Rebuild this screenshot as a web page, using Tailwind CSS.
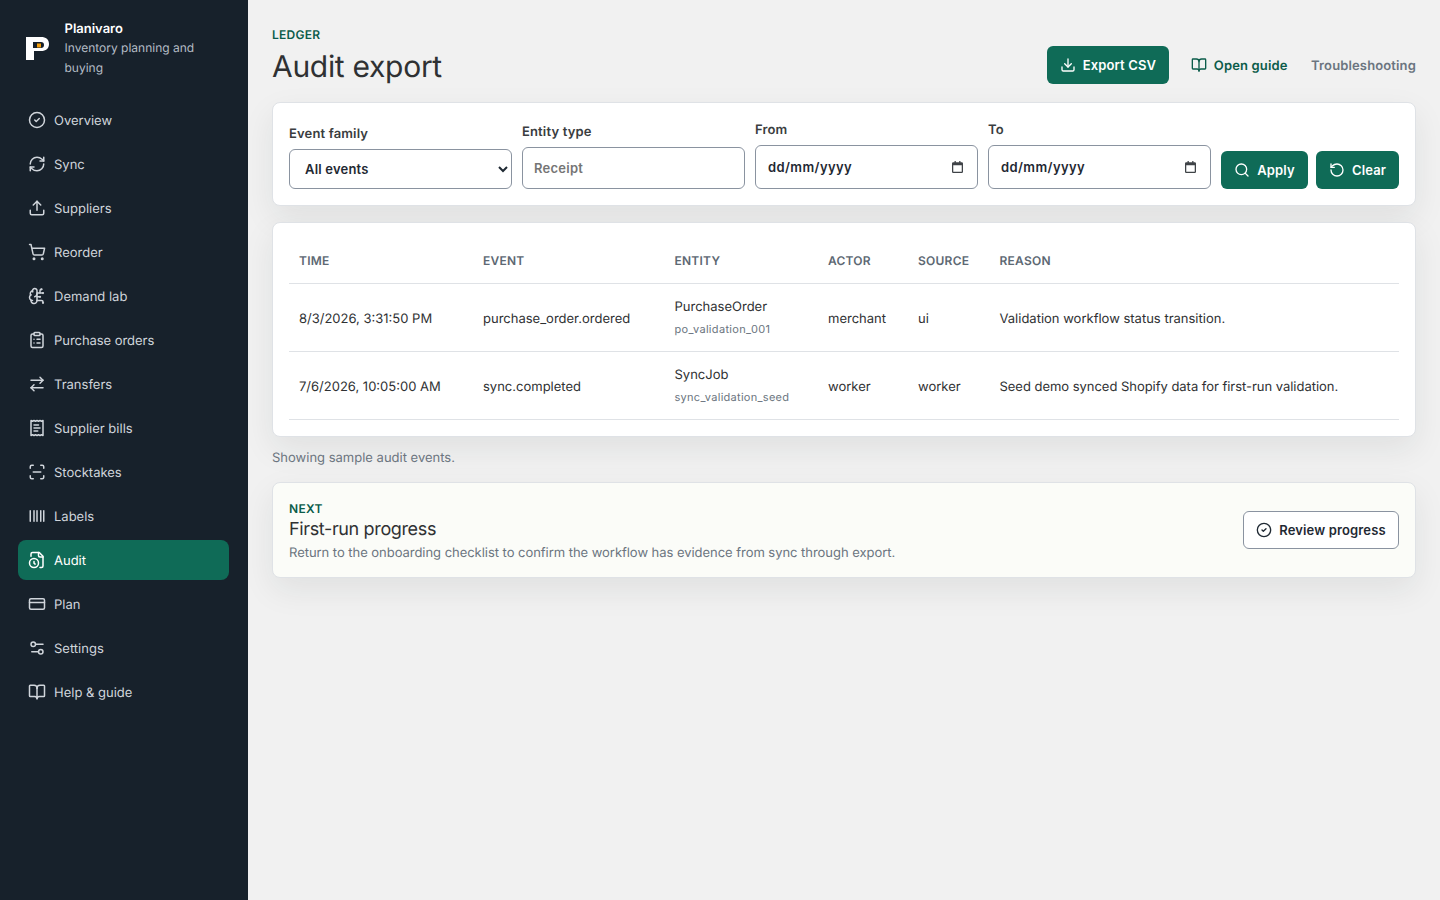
<!DOCTYPE html>
<html lang="en">
<head>
<meta charset="utf-8">
<title>Audit export</title>
<script src="https://cdn.jsdelivr.net/npm/@tailwindcss/browser@4"></script>
</head>
<body class="bg-[#f1f1f1] font-['Inter',sans-serif] text-[#2b2f33] [text-rendering:geometricPrecision]">
<div class="flex min-h-[900px]">
  <aside class="w-[248px] shrink-0 bg-[#17212b] pl-[18px] pr-[19px] pt-[18px]">
    <div class="flex items-center gap-[15.5px] pl-[8px] h-[60px]">
      <svg class="w-[23px] h-[23px] shrink-0" viewBox="0 0 23 23"><path fill="#fff" fill-rule="evenodd" d="M0 0h15c5 0 8 2.500 8 7s-3 7-8 7H8v9H0zM7 5v6h8c2 0 3-1 3-3s-1-3-3-3z"/><rect x="11" y="6.500" width="4" height="4" fill="#f59e0b"/></svg>
      <div class="min-w-0">
        <div class="pt-[2px] text-[13px] leading-[18px] font-semibold text-white">Planivaro</div>
        <div class="text-[12px] leading-[20px] text-[#b4bcc5]">Inventory planning and buying</div>
      </div>
    </div>
    <nav class="mt-[22px] flex flex-col gap-[4px] text-[13px] text-[#d0d5db]">
      <a class="flex items-center gap-[8px] h-[40px] pl-[10px] rounded-lg"><svg class="w-[18px] h-[18px]" viewBox="0 0 24 24" fill="none" stroke="currentColor" stroke-width="2" stroke-linecap="round" stroke-linejoin="round"><circle cx="12" cy="12" r="10"/><path d="m9 12 2 2 4-4"/></svg><span class="pt-[4px]">Overview</span></a>
      <a class="flex items-center gap-[8px] h-[40px] pl-[10px] rounded-lg"><svg class="w-[18px] h-[18px]" viewBox="0 0 24 24" fill="none" stroke="currentColor" stroke-width="2" stroke-linecap="round" stroke-linejoin="round"><path d="M3 12a9 9 0 0 1 9-9 9.750 9.750 0 0 1 6.740 2.740L21 8"/><path d="M21 3v5h-5"/><path d="M21 12a9 9 0 0 1-9 9 9.750 9.750 0 0 1-6.740-2.740L3 16"/><path d="M8 16H3v5"/></svg><span class="pt-[4px]">Sync</span></a>
      <a class="flex items-center gap-[8px] h-[40px] pl-[10px] rounded-lg"><svg class="w-[18px] h-[18px]" viewBox="0 0 24 24" fill="none" stroke="currentColor" stroke-width="2" stroke-linecap="round" stroke-linejoin="round"><path d="M12 3v12"/><path d="m17 8-5-5-5 5"/><path d="M21 15v4a2 2 0 0 1-2 2H5a2 2 0 0 1-2-2v-4"/></svg><span class="pt-[4px]">Suppliers</span></a>
      <a class="flex items-center gap-[8px] h-[40px] pl-[10px] rounded-lg"><svg class="w-[18px] h-[18px]" viewBox="0 0 24 24" fill="none" stroke="currentColor" stroke-width="2" stroke-linecap="round" stroke-linejoin="round"><circle cx="8" cy="21" r="1"/><circle cx="19" cy="21" r="1"/><path d="M2.050 2.050h2l2.660 12.420a2 2 0 0 0 2 1.580h9.780a2 2 0 0 0 1.950-1.570l1.650-7.430H5.120"/></svg><span class="pt-[4px]">Reorder</span></a>
      <a class="flex items-center gap-[8px] h-[40px] pl-[10px] rounded-lg"><svg class="w-[18px] h-[18px]" viewBox="0 0 24 24" fill="none" stroke="currentColor" stroke-width="2" stroke-linecap="round" stroke-linejoin="round"><path d="M12 5a3 3 0 1 0-5.997.125 4 4 0 0 0-2.526 5.770 4 4 0 0 0 .556 6.588A4 4 0 1 0 12 18Z"/><path d="M9 13a4.500 4.500 0 0 0 3-4"/><path d="M6.003 5.125A3 3 0 0 0 6.401 6.500"/><path d="M3.477 10.896a4 4 0 0 1 .585-.396"/><path d="M6 18a4 4 0 0 1-1.967-.516"/><path d="M12 13h4"/><path d="M12 18h6a2 2 0 0 1 2 2v1"/><path d="M12 8h8"/><path d="M16 8V5a2 2 0 0 1 2-2"/><circle cx="16" cy="13" r=".5"/><circle cx="18" cy="3" r=".5"/><circle cx="20" cy="21" r=".5"/><circle cx="20" cy="8" r=".5"/></svg><span class="pt-[4px]">Demand lab</span></a>
      <a class="flex items-center gap-[8px] h-[40px] pl-[10px] rounded-lg"><svg class="w-[18px] h-[18px]" viewBox="0 0 24 24" fill="none" stroke="currentColor" stroke-width="2" stroke-linecap="round" stroke-linejoin="round"><rect x="8" y="2" width="8" height="4" rx="1" ry="1"/><path d="M16 4h2a2 2 0 0 1 2 2v14a2 2 0 0 1-2 2H6a2 2 0 0 1-2-2V6a2 2 0 0 1 2-2h2"/><path d="M12 11h4"/><path d="M12 16h4"/><path d="M8 11h.01"/><path d="M8 16h.01"/></svg><span class="pt-[4px] tracking-[-0.05px]">Purchase orders</span></a>
      <a class="flex items-center gap-[8px] h-[40px] pl-[10px] rounded-lg"><svg class="w-[18px] h-[18px]" viewBox="0 0 24 24" fill="none" stroke="currentColor" stroke-width="2" stroke-linecap="round" stroke-linejoin="round"><path d="m16 3 4 4-4 4"/><path d="M20 7H4"/><path d="m8 21-4-4 4-4"/><path d="M4 17h16"/></svg><span class="pt-[4px]">Transfers</span></a>
      <a class="flex items-center gap-[8px] h-[40px] pl-[10px] rounded-lg"><svg class="w-[18px] h-[18px]" viewBox="0 0 24 24" fill="none" stroke="currentColor" stroke-width="2" stroke-linecap="round" stroke-linejoin="round"><path d="M4 2v20l2-1 2 1 2-1 2 1 2-1 2 1 2-1 2 1V2l-2 1-2-1-2 1-2-1-2 1-2-1-2 1Z"/><path d="M14 8H8"/><path d="M16 12H8"/><path d="M13 16H8"/></svg><span class="pt-[4px]">Supplier bills</span></a>
      <a class="flex items-center gap-[8px] h-[40px] pl-[10px] rounded-lg"><svg class="w-[18px] h-[18px]" viewBox="0 0 24 24" fill="none" stroke="currentColor" stroke-width="2" stroke-linecap="round" stroke-linejoin="round"><path d="M3 7V5a2 2 0 0 1 2-2h2"/><path d="M17 3h2a2 2 0 0 1 2 2v2"/><path d="M21 17v2a2 2 0 0 1-2 2h-2"/><path d="M7 21H5a2 2 0 0 1-2-2v-2"/><path d="M7 12h10"/></svg><span class="pt-[4px]">Stocktakes</span></a>
      <a class="flex items-center gap-[8px] h-[40px] pl-[10px] rounded-lg"><svg class="w-[18px] h-[18px]" viewBox="0 0 24 24" fill="none" stroke="currentColor" stroke-width="2" stroke-linecap="round" stroke-linejoin="round"><path d="M3 5v14"/><path d="M8 5v14"/><path d="M12 5v14"/><path d="M17 5v14"/><path d="M21 5v14"/></svg><span class="pt-[4px]">Labels</span></a>
      <a class="flex items-center gap-[8px] h-[40px] pl-[10px] rounded-lg bg-[#0f6b57] text-white"><svg class="w-[18px] h-[18px]" viewBox="0 0 24 24" fill="none" stroke="currentColor" stroke-width="2" stroke-linecap="round" stroke-linejoin="round"><path d="M14 2v4a2 2 0 0 0 2 2h4"/><path d="M16 22h2a2 2 0 0 0 2-2V7l-5-5H6a2 2 0 0 0-2 2v3"/><circle cx="8" cy="16" r="6"/><path d="M9.500 17.500 8 16.250V14"/></svg><span class="pt-[4px]">Audit</span></a>
      <a class="flex items-center gap-[8px] h-[40px] pl-[10px] rounded-lg"><svg class="w-[18px] h-[18px]" viewBox="0 0 24 24" fill="none" stroke="currentColor" stroke-width="2" stroke-linecap="round" stroke-linejoin="round"><rect x="2" y="5" width="20" height="14" rx="2"/><path d="M2 10h20"/></svg><span class="pt-[4px]">Plan</span></a>
      <a class="flex items-center gap-[8px] h-[40px] pl-[10px] rounded-lg"><svg class="w-[18px] h-[18px]" viewBox="0 0 24 24" fill="none" stroke="currentColor" stroke-width="2" stroke-linecap="round" stroke-linejoin="round"><path d="M20 7h-9"/><path d="M14 17H5"/><circle cx="17" cy="17" r="3"/><circle cx="7" cy="7" r="3"/></svg><span class="pt-[4px]">Settings</span></a>
      <a class="flex items-center gap-[8px] h-[40px] pl-[10px] rounded-lg"><svg class="w-[18px] h-[18px]" viewBox="0 0 24 24" fill="none" stroke="currentColor" stroke-width="2" stroke-linecap="round" stroke-linejoin="round"><path d="M12 7v14"/><path d="M3 18a1 1 0 0 1-1-1V4a1 1 0 0 1 1-1h5a4 4 0 0 1 4 4 4 4 0 0 1 4-4h5a1 1 0 0 1 1 1v13a1 1 0 0 1-1 1h-6a3 3 0 0 0-3 3 3 3 0 0 0-3-3z"/></svg><span class="pt-[4px]">Help &amp; guide</span></a>
    </nav>
  </aside>
  <main class="flex-1 min-w-0 px-[24px] pt-[24px]">
    <header class="flex items-start justify-between h-[60px] mb-[18px]">
      <div class="pt-[1px]">
        <div class="text-[12px] leading-[20px] font-semibold text-[#0b5c4a] tracking-[0.02em]">LEDGER</div>
        <h1 class="mt-[2px] text-[30px] leading-[40px] tracking-[-0.01em] font-normal text-[#2f3133]">Audit export</h1>
      </div>
      <div class="flex items-center self-end tracking-[0.14px]">
        <button class="flex items-center gap-[7px] h-[38px] w-[122px] justify-center rounded-md bg-[#0f6b57] text-white text-[13px] font-semibold"><svg class="w-[16px] h-[16px]" viewBox="0 0 24 24" fill="none" stroke="currentColor" stroke-width="2" stroke-linecap="round" stroke-linejoin="round"><path d="M12 15V3"/><path d="M21 15v4a2 2 0 0 1-2 2H5a2 2 0 0 1-2-2v-4"/><path d="m7 10 5 5 5-5"/></svg><span class="pt-[2px]">Export CSV</span></button>
        <a class="flex items-center gap-[7px] ml-[22px] text-[13px] font-semibold text-[#0b5c4a]"><svg class="w-[16px] h-[16px]" viewBox="0 0 24 24" fill="none" stroke="currentColor" stroke-width="2" stroke-linecap="round" stroke-linejoin="round"><path d="M12 7v14"/><path d="M3 18a1 1 0 0 1-1-1V4a1 1 0 0 1 1-1h5a4 4 0 0 1 4 4 4 4 0 0 1 4-4h5a1 1 0 0 1 1 1v13a1 1 0 0 1-1 1h-6a3 3 0 0 0-3 3 3 3 0 0 0-3-3z"/></svg><span class="pt-[4px]">Open guide</span></a>
        <a class="ml-[23.5px] pt-[4px] text-[13px] font-semibold text-[#6b7580]">Troubleshooting</a>
      </div>
    </header>

    <section class="flex items-end gap-[10px] bg-white border border-[#dfe2e6] rounded-lg p-[16px] shadow-[0_12px_32px_rgba(23,33,43,0.08)]">
      <label class="block w-[223px]"><span class="block pt-[1px] text-[13px] leading-[20px] tracking-[0.15px] font-semibold text-[#3a3d40] mb-[5px]">Event family</span>
        <select class="block w-full h-[40px] rounded-md border border-[#8a93a0] bg-white pl-[11px] text-[13px] tracking-[0.2px] font-semibold text-[#1f2933]"><option>All events</option></select></label>
      <label class="block w-[223px]"><span class="block pt-[1px] text-[13px] leading-[20px] tracking-[0.15px] font-semibold text-[#3a3d40] mb-[5px]">Entity type</span>
        <input placeholder="Receipt" class="block w-full h-[42px] rounded-md border border-[#8a93a0] bg-white px-[11px] text-[13px] tracking-[0.25px] font-semibold text-[#1f2933] placeholder:text-[#757575]"></label>
      <label class="block w-[223px]"><span class="block pt-[1px] text-[13px] leading-[20px] tracking-[0.15px] font-semibold text-[#3a3d40] mb-[5px]">From</span>
        <span class="relative block"><input type="text" value="dd/mm/yyyy" class="block w-full h-[44px] rounded-md border border-[#8a93a0] bg-white px-[12px] text-[13px] tracking-[0.4px] font-semibold text-[#1f2933]"><svg class="absolute right-[15px] top-[16px] w-[11px] h-[12px]" viewBox="0 0 13 14" fill="#3f4347"><path fill-rule="evenodd" d="M3 0h1.500v1.500h4V0H10v1.500h1.500A1.500 1.500 0 0 1 13 3v9.500a1.500 1.500 0 0 1-1.500 1.500h-10A1.500 1.500 0 0 1 0 12.500V3a1.500 1.500 0 0 1 1.500-1.500H3zM1.500 5v7.500h10V5z"/></svg></span></label>
      <label class="block w-[223px]"><span class="block pt-[1px] text-[13px] leading-[20px] tracking-[0.15px] font-semibold text-[#3a3d40] mb-[5px]">To</span>
        <span class="relative block"><input type="text" value="dd/mm/yyyy" class="block w-full h-[44px] rounded-md border border-[#8a93a0] bg-white px-[12px] text-[13px] tracking-[0.4px] font-semibold text-[#1f2933]"><svg class="absolute right-[15px] top-[16px] w-[11px] h-[12px]" viewBox="0 0 13 14" fill="#3f4347"><path fill-rule="evenodd" d="M3 0h1.500v1.500h4V0H10v1.500h1.500A1.500 1.500 0 0 1 13 3v9.500a1.500 1.500 0 0 1-1.500 1.500h-10A1.500 1.500 0 0 1 0 12.500V3a1.500 1.500 0 0 1 1.500-1.500H3zM1.500 5v7.500h10V5z"/></svg></span></label>
      <button class="flex items-center gap-[7px] h-[38px] w-[87px] justify-center rounded-md bg-[#0f6b57] text-white text-[13px] tracking-[0.14px] font-semibold"><svg class="w-[16px] h-[16px]" viewBox="0 0 24 24" fill="none" stroke="currentColor" stroke-width="2" stroke-linecap="round" stroke-linejoin="round"><path d="m21 21-4.340-4.340"/><circle cx="11" cy="11" r="8"/></svg><span class="pt-[2px]">Apply</span></button>
      <button class="-ml-[2px] flex items-center gap-[7px] h-[38px] w-[83px] justify-center rounded-md bg-[#0f6b57] text-white text-[13px] tracking-[0.14px] font-semibold"><svg class="w-[16px] h-[16px]" viewBox="0 0 24 24" fill="none" stroke="currentColor" stroke-width="2" stroke-linecap="round" stroke-linejoin="round"><path d="M3 12a9 9 0 1 0 9-9 9.750 9.750 0 0 0-6.740 2.740L3 8"/><path d="M3 3v5h5"/></svg><span class="pt-[2px]">Clear</span></button>
    </section>

    <section class="mt-[16px] bg-white border border-[#dfe2e6] rounded-lg px-[16px] pt-[15px] pb-[16px] shadow-[0_12px_32px_rgba(23,33,43,0.08)]">
      <table class="w-[1110px] table-fixed text-left text-[13px] text-[#2f3133]">
        <colgroup><col class="w-[184px]"><col class="w-[191.5px]"><col class="w-[153.5px]"><col class="w-[90px]"><col class="w-[81.5px]"><col></colgroup>
        <thead class="text-[12px] text-[#5d6873]">
          <tr class="h-[45px] border-b border-[#dfe2e6]">
            <th class="px-[10px] pt-[2px] font-semibold tracking-[0.02em]">TIME</th><th class="px-[10px] pt-[2px] font-semibold tracking-[0.02em]">EVENT</th><th class="px-[10px] pt-[2px] font-semibold tracking-[0.02em]">ENTITY</th><th class="px-[10px] pt-[2px] font-semibold tracking-[0.02em]">ACTOR</th><th class="px-[10px] pt-[2px] font-semibold tracking-[0.02em]">SOURCE</th><th class="px-[10px] pt-[2px] font-semibold tracking-[0.02em]">REASON</th>
          </tr>
        </thead>
        <tbody>
          <tr class="h-[68px] border-b border-[#dfe2e6]">
            <td class="px-[10px] pt-[6px]">8/3/2026, 3:31:50 PM</td><td class="px-[10px] pt-[6px]">purchase_order.ordered</td>
            <td class="px-[10px]"><div class="leading-[20px]">PurchaseOrder</div><div class="mt-[3px] text-[11px] tracking-[0.32px] leading-[18px] text-[#6b7580]">po_validation_001</div></td>
            <td class="px-[10px] pt-[6px]">merchant</td><td class="px-[10px] pt-[6px]">ui</td><td class="px-[10px] pt-[6px]">Validation workflow status transition.</td>
          </tr>
          <tr class="h-[68px] border-b border-[#dfe2e6]">
            <td class="px-[10px] pt-[6px]">7/6/2026, 10:05:00 AM</td><td class="px-[10px] pt-[6px]">sync.completed</td>
            <td class="px-[10px]"><div class="leading-[20px]">SyncJob</div><div class="mt-[3px] text-[11px] tracking-[0.28px] leading-[18px] text-[#6b7580]">sync_validation_seed</div></td>
            <td class="px-[10px] pt-[6px]">worker</td><td class="px-[10px] pt-[6px]">worker</td><td class="px-[10px] pt-[6px] tracking-[-0.03px]">Seed demo synced Shopify data for first-run validation.</td>
          </tr>
        </tbody>
      </table>
    </section>

    <p class="mt-[11px] text-[13px] leading-[20px] text-[#6b7580]">Showing sample audit events.</p>

    <section class="mt-[14px] flex items-center justify-between h-[96px] bg-[#fbfcf8] border border-[#dfe2e6] rounded-lg px-[16px] shadow-[0_12px_32px_rgba(23,33,43,0.08)]">
      <div class="pt-[4px]">
        <div class="text-[12px] leading-[16px] font-semibold text-[#0b5c4a] tracking-[0.03em]">NEXT</div>
        <h2 class="mt-[1px] text-[18px] leading-[24px] tracking-[-0.36px] font-normal text-[#2f3133]">First-run progress</h2>
        <p class="mt-[1px] text-[13px] leading-[20px] tracking-[-0.04px] text-[#6b7580]">Return to the onboarding checklist to confirm the workflow has evidence from sync through export.</p>
      </div>
      <button class="flex items-center gap-[7px] h-[38px] w-[156px] justify-center rounded-md border border-[#8a93a0] bg-white text-[13px] tracking-[0.14px] font-semibold text-[#1f2933]"><svg class="w-[16px] h-[16px]" viewBox="0 0 24 24" fill="none" stroke="currentColor" stroke-width="2" stroke-linecap="round" stroke-linejoin="round"><circle cx="12" cy="12" r="10"/><path d="m9 12 2 2 4-4"/></svg><span class="pt-[2px]">Review progress</span></button>
    </section>
  </main>
</div>
</body>
</html>
